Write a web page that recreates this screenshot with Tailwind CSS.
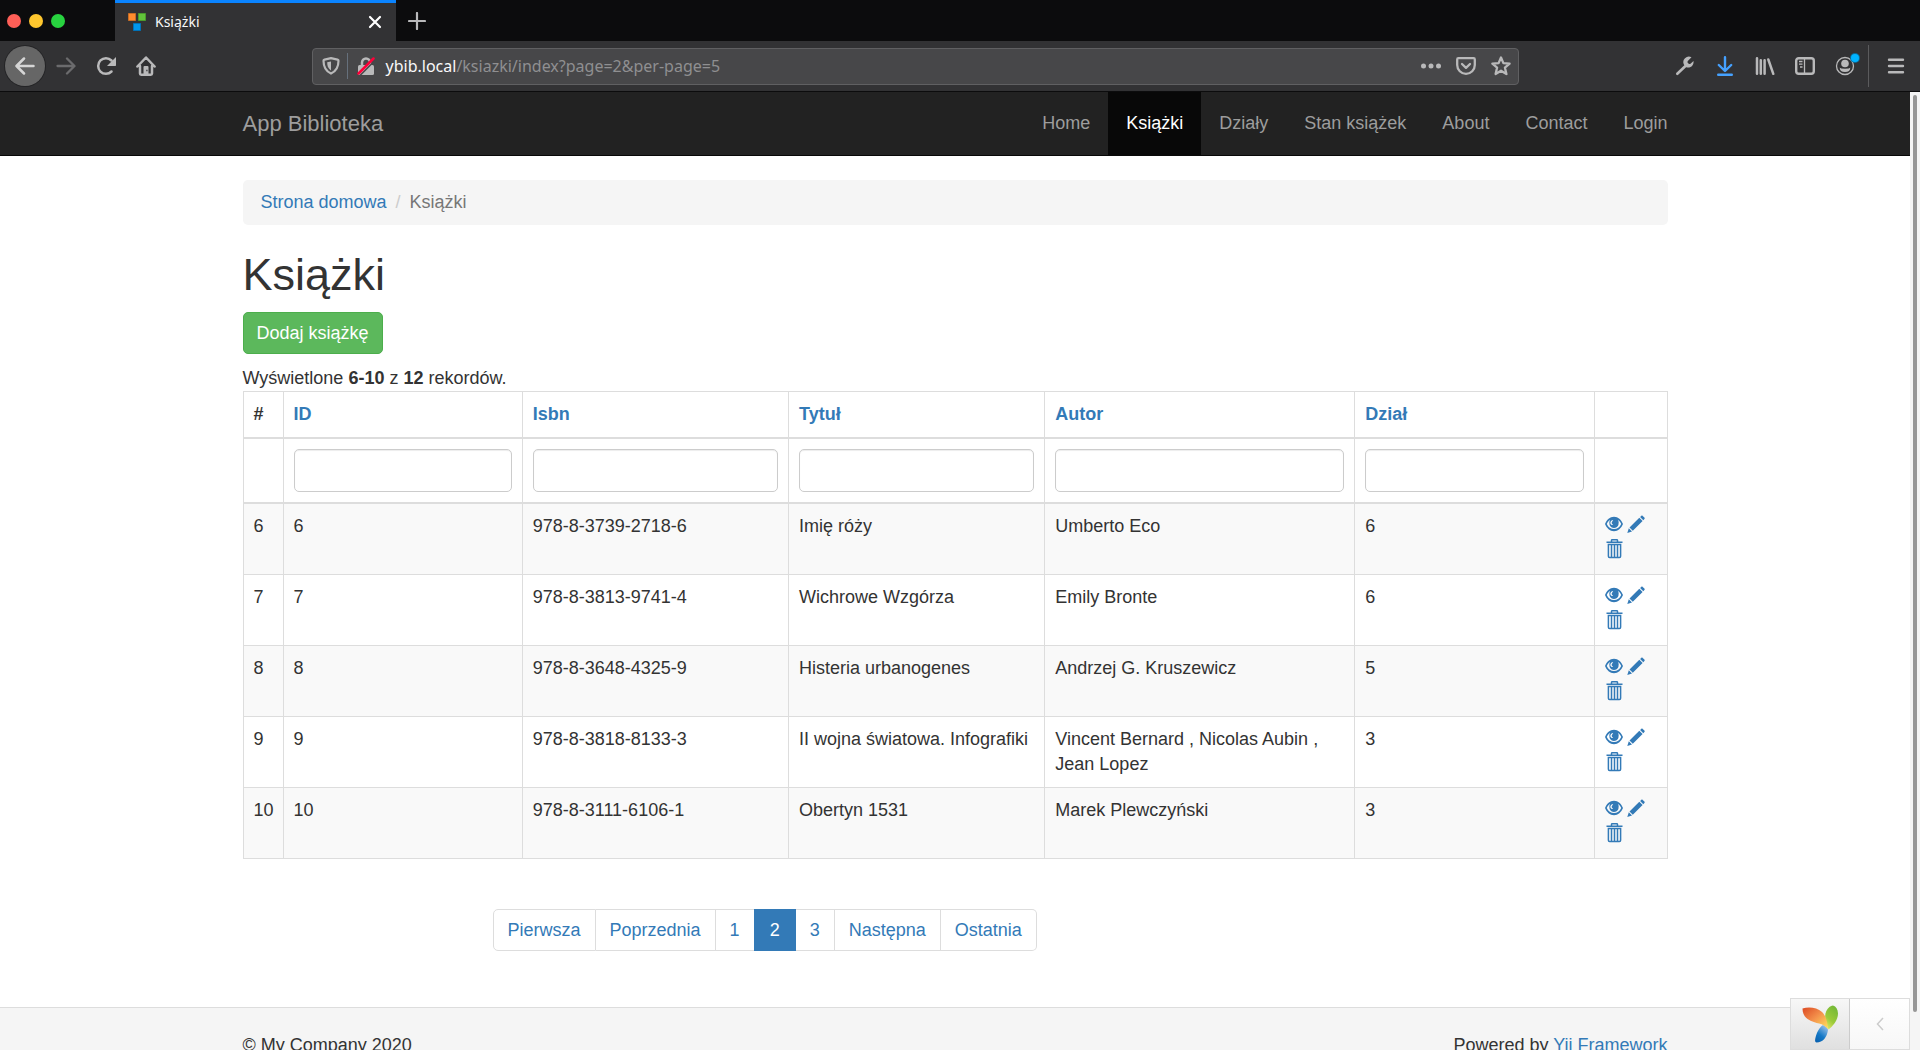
<!DOCTYPE html>
<html lang="pl">
<head>
<meta charset="utf-8">
<meta name="viewport" content="width=device-width, initial-scale=1">
<title>Książki</title>
<script src="https://cdn.jsdelivr.net/npm/@tailwindcss/browser@4"></script>
</head>
<body class="flex h-screen flex-col overflow-hidden bg-white font-['Liberation_Sans',Arial,sans-serif] text-[18px] leading-[25px] text-[#333]">

<svg class="hidden" aria-hidden="true">
  <symbol id="eye" viewBox="0 0 18 20">
    <path fill="currentColor" fill-rule="evenodd" d="M9 2.800C4.800 2.800 1.800 5.800 0 10c1.800 4.200 4.800 7.200 9 7.200s7.200-3 9-7.200c-1.800-4.200-4.800-7.200-9-7.200zM5 6a5.300 5.300 0 0 0-.4 5c.8 2 2.500 3 4.400 3s3.600-1 4.400-3a5.300 5.300 0 0 0-.4-5c1.500.9 2.500 2.300 3.200 4-1.500 3.200-4 5-7.200 5S3.300 13.200 1.800 10C2.500 8.300 3.500 6.900 5 6zM7 6.200c-1.600.8-2 2.400-1.400 3.700.6 1.200 2 1.400 2.600.6-1-.2-1.600-.9-1.500-1.900.1-.9.8-1.500 1.500-1.900-.3-.5-.8-.6-1.200-.5z"/>
  </symbol>
  <symbol id="pencil" viewBox="0 0 18 20">
    <path fill="currentColor" d="M14.200 1.900c.5-.5 1-.5 1.500 0l1.700 1.700c.5.500.5 1 0 1.500l-1.100 1.100-3.200-3.200zM12.300 3.700l3.300 3.300-9.800 9.800-3.300-3.300zM1.800 14.300l3.200 3.200L.3 19z"/>
  </symbol>
  <symbol id="trash" viewBox="0 0 18 20">
    <path fill="none" stroke="currentColor" stroke-width="1.500" d="M1.500 3.300h16M6.500 3.300V1.500q0-.8.800-.8h4.400q.8 0 .8.800v1.800M3.400 5.500h12.200v11.700q0 1.200-1.200 1.200H4.600q-1.200 0-1.200-1.200zM6.500 6v12.200M9.500 6v12.200M12.500 6v12.200"/>
  </symbol>
</svg>

<!-- Tab strip -->
<header class="shrink-0 font-['Noto_Sans',sans-serif]">
  <div class="flex h-[41px] bg-[#0c0c0d]">
    <div class="flex w-[115px] items-center gap-2 pl-[7px] pt-px">
      <span class="size-[14px] rounded-full bg-[#ff5f57]"></span>
      <span class="size-[14px] rounded-full bg-[#ffc72e]"></span>
      <span class="size-[14px] rounded-full bg-[#28d33f]"></span>
    </div>
    <div class="flex w-[281px] items-center border-t-[3px] border-[#0a84ff] bg-[#323234] pl-[13px] pr-[14px]">
      <svg class="size-[18px]" viewBox="0 0 18 18" aria-hidden="true">
        <path fill="#ff8c2e" stroke="#c96d24" d="M.5.5h7v7h-7z"/><path fill="#62c33a" stroke="#4a9a2c" d="M10.500.5h7v7h-7z"/><path fill="#0096eb" stroke="#0072b8" d="M5.500 10.500h7v7h-7z"/>
      </svg>
      <span class="flex-1 pl-[9px] text-[14px] leading-[20px] text-[#f9f9fa]">Książki</span>
      <button type="button" aria-label="Zamknij kartę"><svg class="size-[14px]" viewBox="0 0 14 14"><path stroke="#fff" stroke-width="2.200" stroke-linecap="round" d="M2 2l10 10M12 2L2 12"/></svg></button>
    </div>
    <button type="button" class="pl-3" aria-label="Nowa karta"><svg class="size-[18px]" viewBox="0 0 18 18"><path stroke="#b9b9ba" stroke-width="2.200" stroke-linecap="round" d="M9 1v16M1 9h16"/></svg></button>
  </div>

  <!-- Toolbar -->
  <div class="flex h-[51px] items-center border-b border-[#0c0c0d] bg-[#323234] text-[#b9b9ba]">
    <div class="flex items-center gap-5 pl-[5px]">
      <button type="button" aria-label="Wstecz" class="flex size-[40px] items-center justify-center rounded-full bg-[#666] text-[#d5d5d5] ring-1 ring-[#242426]"><svg class="size-[20px]" viewBox="0 0 20 20"><path fill="none" stroke="currentColor" stroke-width="2.500" stroke-linecap="round" stroke-linejoin="round" d="M18.500 10H2M9 2.500L1.500 10 9 17.500"/></svg></button>
      <button type="button" aria-label="Dalej" class="-ml-[9px] text-[#6b6b6d]"><svg class="size-[20px]" viewBox="0 0 20 20"><path fill="none" stroke="currentColor" stroke-width="2.300" stroke-linecap="round" stroke-linejoin="round" d="M1.500 10H18M11 2.500l7.500 7.500-7.500 7.500"/></svg></button>
      <button type="button" aria-label="Odśwież"><svg class="size-[20px]" viewBox="0 0 20 20"><path fill="none" stroke="currentColor" stroke-width="2.500" stroke-linecap="round" d="M15.500 15.500A7.800 7.800 0 1 1 15.500 4.500"/><path fill="currentColor" d="M20 1v8.300q0 .7-.7.700H11z"/></svg></button>
      <button type="button" aria-label="Strona startowa"><svg class="size-[20px]" viewBox="0 0 20 20"><path fill="none" stroke="currentColor" stroke-width="2.500" stroke-linecap="round" stroke-linejoin="round" d="M1.400 10.500L10 1.500l8.600 9M4 10v7.500q0 1.200 1.200 1.200h9.600q1.200 0 1.200-1.200V10"/><path fill="currentColor" d="M7.500 18.500V11q0-1 1-1h3q1 0 1 1v7.500z"/><path fill="#323234" d="M10.300 13.700h1.200v1.500h-1.200z"/></svg></button>
    </div>
    <div class="w-[8.1%]"></div>
    <div class="flex h-[37px] flex-1 items-center rounded-[4px] border border-[#606062] bg-[#474749] pl-[9px] pr-[7px]">
      <svg class="size-[18px]" viewBox="0 0 18 18" aria-hidden="true"><path fill="none" stroke="currentColor" stroke-width="2.200" stroke-linejoin="round" d="M9 1.200L2.500 2.600q-1 .2-1 1.200c0 6 1.500 10 7.500 12.800 6-2.800 7.500-6.800 7.500-12.800q0-1-1-1.200z"/><path fill="currentColor" d="M9 4.500v9C6 11.500 5.200 9 5.200 5.300z"/></svg>
      <span class="ml-[7px] mr-[9px] h-[26px] w-px bg-[#66707c]"></span>
      <svg class="size-[18px]" viewBox="0 0 18 18" aria-hidden="true"><path fill="none" stroke="currentColor" stroke-width="2.500" d="M5 9V5.500a4 4 0 0 1 8 0V9"/><rect x="1" y="8" width="16" height="10" rx="1.500" fill="currentColor"/><path stroke="#474749" stroke-width="1.500" d="M2.500 19L18 3.500"/><path stroke="#ff0039" stroke-width="2.500" stroke-linecap="round" d="M1.500 16.500L16.500 1.500"/></svg>
      <span class="flex-1 pl-[11px] text-[16px] leading-[24px] text-[#8f8f91]"><span class="text-[#f9f9fa]">ybib.local</span>/ksiazki/index?page=2&amp;per-page=5</span>
      <div class="flex items-center gap-[15px]">
        <button type="button" aria-label="Więcej"><svg class="size-[20px]" viewBox="0 0 20 20"><g fill="currentColor"><circle cx="2.500" cy="10" r="2.500"/><circle cx="10" cy="10" r="2.500"/><circle cx="17.500" cy="10" r="2.500"/></g></svg></button>
        <button type="button" aria-label="Pocket"><svg class="size-[20px]" viewBox="0 0 20 20"><path fill="none" stroke="currentColor" stroke-width="2.300" stroke-linecap="round" stroke-linejoin="round" d="M2.400 2.200h15.200q1.200 0 1.200 1.200V9a8.800 8.800 0 0 1-17.600 0V3.400q0-1.200 1.200-1.200zM6 8l4 3.800L14 8"/></svg></button>
        <button type="button" aria-label="Zakładka"><svg class="size-[20px]" viewBox="0 0 20 20"><path fill="none" stroke="currentColor" stroke-width="2.300" stroke-linejoin="round" d="M10 1.500l2.400 5.600 6.200.5-4.700 4 1.500 6.400L10 14.700 4.600 18l1.500-6.400-4.700-4 6.200-.5z"/></svg></button>
      </div>
    </div>
    <div class="w-[8.1%]"></div>
    <div class="flex items-center gap-5 pr-[14px]">
      <button type="button" aria-label="Narzędzia"><svg class="size-[20px]" viewBox="0 0 20 20"><path stroke="currentColor" stroke-width="2.600" stroke-linecap="round" d="M2.300 17.800L11 9.500"/><path fill="currentColor" d="M16.500 1.200A5.600 5.600 0 0 0 9 8.800l2.300 2.500c3.600 1.200 7.800-1.500 7.200-6.300l-3 2.700q-1.400.6-2.400-.4t-.3-2.400z"/></svg></button>
      <button type="button" aria-label="Pobieranie" class="text-[#45a1ff]"><svg class="size-[20px]" viewBox="0 0 20 20"><path fill="none" stroke="currentColor" stroke-width="2.400" stroke-linecap="round" stroke-linejoin="round" d="M10 1.200v13M3.800 9l6.200 6 6.200-6M3.200 18.800h13.600"/></svg></button>
      <button type="button" aria-label="Biblioteka"><svg class="size-[20px]" viewBox="0 0 20 20"><path fill="none" stroke="currentColor" stroke-width="2.500" stroke-linecap="round" d="M2 2.200v15.600M5.800 4.200v13.600M9.600 4.200v13.600M13.300 3.500l5 14.300"/></svg></button>
      <button type="button" aria-label="Panel boczny"><svg class="size-[20px]" viewBox="0 0 20 20"><rect x="1.200" y="2.200" width="17.600" height="15.600" rx="2.500" fill="none" stroke="currentColor" stroke-width="2.400"/><path stroke="currentColor" stroke-width="1.300" d="M9.500 3v14M4 5.500h3.500M4 8.200h3.500M5 11h2.500"/></svg></button>
      <button type="button" aria-label="Konto" class="relative"><svg class="size-[20px]" viewBox="0 0 20 20"><circle cx="10" cy="10" r="8.500" fill="none" stroke="currentColor" stroke-width="1.300"/><circle cx="10" cy="7.500" r="3.800" fill="currentColor"/><path fill="currentColor" d="M4.700 11.500q.7 1.200 5.300 1.200t5.300-1.200q0 4.500-5.300 4.500t-5.300-4.500z"/></svg><span class="absolute -right-1 -top-[2px] size-2 rounded-full bg-[#00b3ff] ring-1 ring-[#0a6c99]"></span></button>
      <div class="-ml-[7px] flex items-center">
        <span class="mr-[17px] h-[42px] w-px bg-[#5b5b5d]"></span>
        <button type="button" aria-label="Menu"><svg class="size-[20px]" viewBox="0 0 20 20"><path stroke="currentColor" stroke-width="2.400" stroke-linecap="round" d="M3 3.700h14M3 10h14M3 16.300h14"/></svg></button>
      </div>
    </div>
  </div>
</header>

<div class="relative flex min-h-0 flex-1">
  <div class="min-w-0 flex-1 overflow-hidden">

    <!-- Site navigation -->
    <nav class="border-b border-[#080808] bg-[#222] px-5">
      <div class="mx-auto flex max-w-[1425px] items-center justify-between">
        <a href="#" class="text-[22px] text-[#9d9d9d]">App Biblioteka</a>
        <ul class="-mr-[18px] flex text-[#9d9d9d]">
          <li><a href="#" class="block px-[18px] py-[19px]">Home</a></li>
          <li><a href="#" class="block bg-[#080808] px-[18px] py-[19px] text-white">Książki</a></li>
          <li><a href="#" class="block px-[18px] py-[19px]">Działy</a></li>
          <li><a href="#" class="block px-[18px] py-[19px]">Stan książek</a></li>
          <li><a href="#" class="block px-[18px] py-[19px]">About</a></li>
          <li><a href="#" class="block px-[18px] py-[19px]">Contact</a></li>
          <li><a href="#" class="block px-[18px] py-[19px]">Login</a></li>
        </ul>
      </div>
    </nav>

    <main class="px-5 pt-6">
      <div class="mx-auto max-w-[1425px]">
        <ol class="flex rounded-[5px] bg-[#f5f5f5] px-[18px] py-[10px]">
          <li><a href="#" class="text-[#337ab7]">Strona domowa</a></li>
          <li class="px-[9px] text-[#ccc]" aria-hidden="true">/</li>
          <li class="text-[#777]">Książki</li>
        </ol>

        <h1 class="mb-3 mt-[25px] text-[45px] leading-[50px]">Książki</h1>
        <button type="button" class="mb-3 block h-[42px] rounded-[5px] border border-[#4cae4c] bg-[#5cb85c] px-[13px] text-white">Dodaj książkę</button>

        <p>Wyświetlone <b>6-10</b> z <b>12</b> rekordów.</p>
        <table class="w-full table-fixed border-collapse text-left [&_td]:border [&_td]:border-[#ddd] [&_td]:p-[10px] [&_td]:align-top [&_th]:border [&_th]:border-b-2 [&_th]:border-[#ddd] [&_th]:p-[10px]">
          <colgroup>
            <col class="w-[40px]"><col class="w-[16.8%]"><col class="w-[18.7%]"><col class="w-[18%]"><col><col class="w-[16.8%]"><col class="w-[73px]">
          </colgroup>
          <thead>
            <tr>
              <th>#</th>
              <th><a href="#" class="text-[#337ab7]">ID</a></th>
              <th><a href="#" class="text-[#337ab7]">Isbn</a></th>
              <th><a href="#" class="text-[#337ab7]">Tytuł</a></th>
              <th><a href="#" class="text-[#337ab7]">Autor</a></th>
              <th><a href="#" class="text-[#337ab7]">Dział</a></th>
              <th></th>
            </tr>
            <tr class="[&>td]:border-b-2 [&_input]:block [&_input]:h-[43px] [&_input]:w-full [&_input]:rounded-[5px] [&_input]:border [&_input]:border-[#ccc] [&_input]:px-[14px] [&_input]:shadow-[inset_0_1px_1px_#00000013]">
              <td></td>
              <td><input type="text" aria-label="ID"></td>
              <td><input type="text" aria-label="Isbn"></td>
              <td><input type="text" aria-label="Tytuł"></td>
              <td><input type="text" aria-label="Autor"></td>
              <td><input type="text" aria-label="Dział"></td>
              <td></td>
            </tr>
          </thead>
          <tbody>
            <tr class="bg-[#f9f9f9]">
              <td>6</td><td>6</td><td>978-8-3739-2718-6</td><td>Imię róży</td><td>Umberto Eco</td><td>6</td>
              <td><div class="flex flex-wrap gap-x-1 text-[#337ab7]"><a href="#" class="h-[25px]" aria-label="Zobacz"><svg class="h-5 w-[18px]"><use href="#eye"/></svg></a><a href="#" class="h-[25px]" aria-label="Edytuj"><svg class="h-5 w-[18px]"><use href="#pencil"/></svg></a><a href="#" class="h-[25px]" aria-label="Usuń"><svg class="h-5 w-[18px]"><use href="#trash"/></svg></a></div></td>
            </tr>
            <tr>
              <td>7</td><td>7</td><td>978-8-3813-9741-4</td><td>Wichrowe Wzgórza</td><td>Emily Bronte</td><td>6</td>
              <td><div class="flex flex-wrap gap-x-1 text-[#337ab7]"><a href="#" class="h-[25px]" aria-label="Zobacz"><svg class="h-5 w-[18px]"><use href="#eye"/></svg></a><a href="#" class="h-[25px]" aria-label="Edytuj"><svg class="h-5 w-[18px]"><use href="#pencil"/></svg></a><a href="#" class="h-[25px]" aria-label="Usuń"><svg class="h-5 w-[18px]"><use href="#trash"/></svg></a></div></td>
            </tr>
            <tr class="bg-[#f9f9f9]">
              <td>8</td><td>8</td><td>978-8-3648-4325-9</td><td>Histeria urbanogenes</td><td>Andrzej G. Kruszewicz</td><td>5</td>
              <td><div class="flex flex-wrap gap-x-1 text-[#337ab7]"><a href="#" class="h-[25px]" aria-label="Zobacz"><svg class="h-5 w-[18px]"><use href="#eye"/></svg></a><a href="#" class="h-[25px]" aria-label="Edytuj"><svg class="h-5 w-[18px]"><use href="#pencil"/></svg></a><a href="#" class="h-[25px]" aria-label="Usuń"><svg class="h-5 w-[18px]"><use href="#trash"/></svg></a></div></td>
            </tr>
            <tr>
              <td>9</td><td>9</td><td>978-8-3818-8133-3</td><td>II wojna światowa. Infografiki</td><td>Vincent Bernard , Nicolas Aubin , Jean Lopez</td><td>3</td>
              <td><div class="flex flex-wrap gap-x-1 text-[#337ab7]"><a href="#" class="h-[25px]" aria-label="Zobacz"><svg class="h-5 w-[18px]"><use href="#eye"/></svg></a><a href="#" class="h-[25px]" aria-label="Edytuj"><svg class="h-5 w-[18px]"><use href="#pencil"/></svg></a><a href="#" class="h-[25px]" aria-label="Usuń"><svg class="h-5 w-[18px]"><use href="#trash"/></svg></a></div></td>
            </tr>
            <tr class="bg-[#f9f9f9]">
              <td>10</td><td>10</td><td>978-8-3111-6106-1</td><td>Obertyn 1531</td><td>Marek Plewczyński</td><td>3</td>
              <td><div class="flex flex-wrap gap-x-1 text-[#337ab7]"><a href="#" class="h-[25px]" aria-label="Zobacz"><svg class="h-5 w-[18px]"><use href="#eye"/></svg></a><a href="#" class="h-[25px]" aria-label="Edytuj"><svg class="h-5 w-[18px]"><use href="#pencil"/></svg></a><a href="#" class="h-[25px]" aria-label="Usuń"><svg class="h-5 w-[18px]"><use href="#trash"/></svg></a></div></td>
            </tr>
          </tbody>
        </table>

        <ul class="mb-14 ml-[250px] mt-[50px] flex leading-[26px] text-[#337ab7]">
          <li><a href="#" class="block rounded-l-[5px] border border-[#ddd] px-[14px] py-[7px]">Pierwsza</a></li>
          <li><a href="#" class="block border-y border-r border-[#ddd] px-[14px] py-[7px]">Poprzednia</a></li>
          <li><a href="#" class="block border-y border-[#ddd] px-[14px] py-[7px]">1</a></li>
          <li><a href="#" class="block border border-[#337ab7] bg-[#337ab7] px-[15px] py-[7px] text-white">2</a></li>
          <li><a href="#" class="block border-y border-r border-[#ddd] px-[14px] py-[7px]">3</a></li>
          <li><a href="#" class="block border-y border-r border-[#ddd] px-[14px] py-[7px]">Następna</a></li>
          <li><a href="#" class="block rounded-r-[5px] border-y border-r border-[#ddd] px-[14px] py-[7px]">Ostatnia</a></li>
        </ul>
      </div>
    </main>

    <footer class="border-t border-[#ddd] bg-[#f5f5f5] px-5 py-[25px]">
      <div class="mx-auto flex max-w-[1425px] justify-between">
        <p>© My Company 2020</p>
        <p>Powered by <a href="#" class="text-[#337ab7]">Yii Framework</a></p>
      </div>
    </footer>
  </div>

  <!-- Scrollbar -->
  <div class="w-[10px] shrink-0 bg-[#f5f5f5] pl-[3px] pt-[3px]">
    <div class="h-[96%] w-1 rounded-full bg-[#979797]"></div>
  </div>

  <!-- Debug toolbar -->
  <div class="absolute bottom-0 right-[10px] flex h-[52px] border border-[#ddd] bg-linear-to-b from-white to-[#f7f7f7]">
    <a href="#" aria-label="Yii Debugger" class="flex w-[59px] items-center justify-center border-r border-[#ccc] bg-linear-to-b from-[#f7f7f7] to-[#e0e0e0]">
      <svg class="h-[38px] w-[36px]" viewBox="0 0 36 38">
        <defs>
          <linearGradient id="orange" x1="0" y1="0" x2="1" y2="1"><stop stop-color="#dc4a24"/><stop offset=".5" stop-color="#f4924c"/><stop offset="1" stop-color="#ffe45c"/></linearGradient>
          <linearGradient id="green" x1=".7" y1="0" x2=".2" y2="1"><stop stop-color="#73b837"/><stop offset=".6" stop-color="#9ccb3a"/><stop offset="1" stop-color="#e4e665"/></linearGradient>
          <linearGradient id="blue" x1=".8" y1="0" x2=".2" y2="1"><stop stop-color="#a0c4ea"/><stop offset=".6" stop-color="#1478c6"/><stop offset="1" stop-color="#0a62b0"/></linearGradient>
        </defs>
        <path fill="url(#blue)" d="M21 20c3 1.500 5 3 5 5-1 7-5 12.500-11.500 12.500-1.800-.5-1.500-2-1.200-4C14.500 28 17 22.500 21 20z"/>
        <path fill="url(#green)" d="M26.500 24.500C23.500 18 22.500 13 23.500 8.500 25 3 28 1 31 .5c3.200 1 4.700 3.500 5 8 0 6.500-5 12.500-9.500 16z"/>
        <path fill="url(#orange)" d="M.5 3.500C7 1.500 15 2.500 20 7c4 4 5.500 10 6 17-3-3-5-4.500-9-5.500C8 16.500.5 13 .5 3.500z"/>
      </svg>
    </a>
    <button type="button" aria-label="Rozwiń" class="flex w-[59px] items-center justify-center"><svg class="h-[14px] w-2" viewBox="0 0 8 14"><path fill="none" stroke="#ccc" stroke-width="1.500" d="M7 1L1.500 7 7 13"/></svg></button>
  </div>
</div>
</body>
</html>
